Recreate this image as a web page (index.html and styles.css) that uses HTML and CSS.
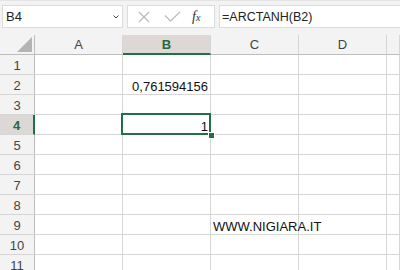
FILE: index.html
```html
<!DOCTYPE html>
<html lang="it">
<head>
<meta charset="UTF-8" />
<title>ARCTANH</title>
<link rel="stylesheet" href="styles.css">
</head>
<body>

<div class="bar">
  <div class="namebox">
    <span>B4</span>
    <svg class="chev" width="6" height="4" viewBox="0 0 6 4"><path d="M0.5 0.5 L3 3 L5.5 0.5" fill="none" stroke="#444" stroke-width="1"/></svg>
  </div>
  <div class="fxgroup">
    <svg width="12" height="12" viewBox="0 0 12 12"><path d="M1 1 L11 11 M11 1 L1 11" stroke="#b8b8b8" stroke-width="1.1" fill="none"/></svg>
    <svg width="17" height="11" viewBox="0 0 17 11"><path d="M1 4.5 L6.5 10 L16 1" stroke="#b8b8b8" stroke-width="1.1" fill="none"/></svg>
    <span class="fx">f<small>x</small></span>
  </div>
  <div class="formula">=ARCTANH(B2)</div>
</div>

<div class="sheet">
  <div class="hd corner"><i></i></div>
  <div class="hd col">A</div>
  <div class="hd col sel">B</div>
  <div class="hd col">C</div>
  <div class="hd col">D</div>
  <div class="hd col"></div>

  <div class="hd row">1</div><div class="c"></div><div class="c"></div><div class="c"></div><div class="c"></div><div class="c"></div>
  <div class="hd row">2</div><div class="c"></div><div class="c num">0,761594156</div><div class="c"></div><div class="c"></div><div class="c"></div>
  <div class="hd row">3</div><div class="c"></div><div class="c"></div><div class="c"></div><div class="c"></div><div class="c"></div>
  <div class="hd row sel">4</div><div class="c"></div><div class="c num active">1<b></b></div><div class="c"></div><div class="c"></div><div class="c"></div>
  <div class="hd row">5</div><div class="c"></div><div class="c"></div><div class="c"></div><div class="c"></div><div class="c"></div>
  <div class="hd row">6</div><div class="c"></div><div class="c"></div><div class="c"></div><div class="c"></div><div class="c"></div>
  <div class="hd row">7</div><div class="c"></div><div class="c"></div><div class="c"></div><div class="c"></div><div class="c"></div>
  <div class="hd row">8</div><div class="c"></div><div class="c"></div><div class="c"></div><div class="c"></div><div class="c"></div>
  <div class="hd row">9</div><div class="c"></div><div class="c"></div><div class="c text">WWW.NIGIARA.IT</div><div class="c"></div><div class="c"></div>
  <div class="hd row">10</div><div class="c"></div><div class="c"></div><div class="c"></div><div class="c"></div><div class="c"></div>
  <div class="hd row">11</div><div class="c"></div><div class="c"></div><div class="c"></div><div class="c"></div><div class="c"></div>
</div>

</body>
</html>
```

FILE: styles.css
```css
body {
  margin: 0;
  background: #f3f3f3;
  font-family: "Liberation Sans", Arial, sans-serif;
  color: #222;
  overflow: hidden;
}

.bar {
  display: flex;
  gap: 4px;
  height: 35px;
  box-sizing: border-box;
  padding: 4px 0 0 2px;
  border-top: 1px solid #e4e4e4;
}

.namebox,
.fxgroup,
.formula {
  height: 23px;
  box-sizing: border-box;
  background: #fff;
  border: 1px solid #dcdcdc;
  border-right: none;
  display: flex;
  align-items: center;
}

.namebox {
  width: 121px;
  border-right: 1px solid #dcdcdc;
  padding: 0 3px 0 3px;
  justify-content: space-between;
  font-size: 13px;
}

.fxgroup {
  width: 88px;
  border-right: 1px solid #dcdcdc;
  padding-left: 10px;
  gap: 14px;
}

.fx {
  font-family: "Liberation Serif", serif;
  font-style: italic;
  font-size: 14px;
  color: #333;
  margin-left: -3px;
}

.fx small {
  font-size: 10px;
}

.formula {
  flex: 1;
  padding-left: 2px;
  font-size: 12.5px;
  color: #222;
}

.sheet {
  display: grid;
  grid-template-columns: 35px 88px 88px 88px 88px 1fr;
  grid-auto-rows: 20px;
  background: #fff;
}

.hd {
  background: #f3f3f3;
  color: #444;
  font-size: 13px;
  display: flex;
  align-items: center;
  justify-content: center;
  box-sizing: border-box;
}

.col {
  border-right: 1px solid #d6d6d6;
  border-bottom: 1px solid #bdbdbd;
}

.row {
  border-right: 1px solid #bdbdbd;
  border-bottom: 1px solid #d6d6d6;
  padding-top: 1px;
}

.corner {
  border-right: 1px solid #bdbdbd;
  border-bottom: 1px solid #bdbdbd;
  justify-content: flex-end;
  align-items: flex-end;
  padding: 0 2px 2px 0;
}

.corner i {
  width: 0;
  height: 0;
  border-left: 15px solid transparent;
  border-bottom: 15px solid #b4b4b4;
}

.hd.sel {
  background: #ddd7d6;
  color: #1e6b40;
  font-weight: bold;
}

.col.sel {
  border-bottom: 2px solid #1f7145;
}

.row.sel {
  border-right: 2px solid #1f7145;
}

.c {
  border-right: 1px solid #d6d6d6;
  border-bottom: 1px solid #d6d6d6;
  box-sizing: border-box;
  font-size: 13px;
  color: #111;
  padding: 4px 2px 0;
  white-space: nowrap;
}

.num {
  text-align: right;
}

.text {
  overflow: visible;
}

.active {
  position: relative;
}

.active::after {
  content: "";
  position: absolute;
  top: -2px;
  left: -2px;
  right: -1px;
  bottom: -1px;
  border: 2px solid #1f7145;
}

.active b {
  position: absolute;
  right: -4px;
  bottom: -4px;
  width: 5px;
  height: 5px;
  background: #1f7145;
  border: 1px solid #fff;
  box-sizing: content-box;
  margin: -1px;
  z-index: 1;
}
```
